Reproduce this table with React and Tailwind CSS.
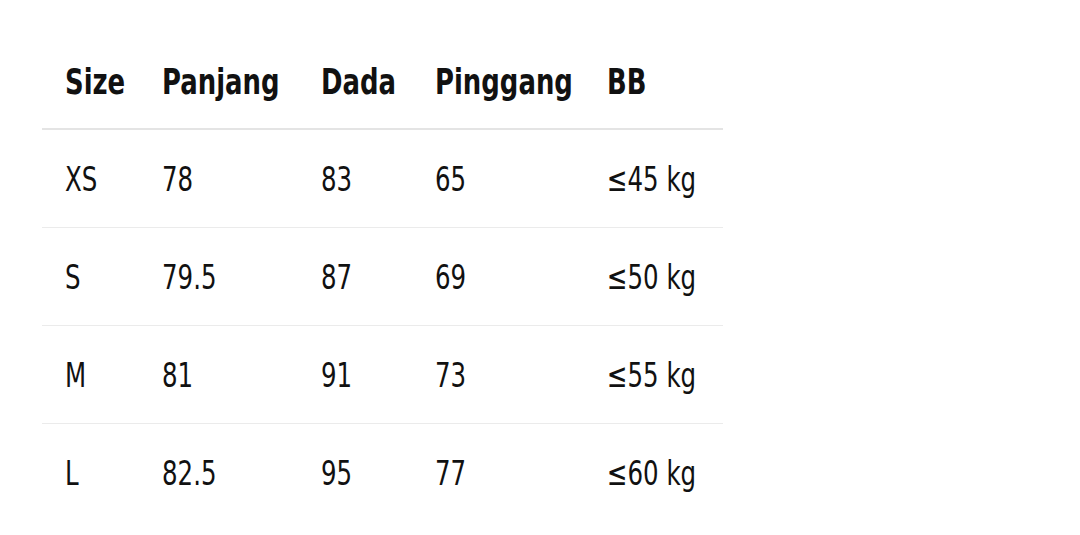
import React from "react";

const rows = [
  ["XS", "78", "83", "65", "≤45 kg"],
  ["S", "79.5", "87", "69", "≤50 kg"],
  ["M", "81", "91", "73", "≤55 kg"],
  ["L", "82.5", "95", "77", "≤60 kg"],
];
const head = ["Size", "Panjang", "Dada", "Pinggang", "BB"];

export default function App() {
  return (
    <div
      className="w-[1080px] h-[535px] bg-white text-[#111] overflow-hidden pt-[32px] pl-[42px]"
      style={{ fontFamily: '"Liberation Sans Narrow", "DejaVu Sans Condensed", "Liberation Sans", sans-serif' }}
    >
      <div className="w-[681px]">
        <div className="grid grid-cols-[97px_159px_114px_172px_139px] h-[98px] items-center border-b-2 border-[#e4e4e4]">
          {head.map((h) => (
            <div key={h} className="pl-[23px] pt-[5px] whitespace-nowrap">
              <span className="inline-block origin-left scale-x-[0.8] text-[36px] font-bold leading-none">{h}</span>
            </div>
          ))}
        </div>
        {rows.map((r, i) => (
          <div
            key={i}
            className={
              "grid grid-cols-[97px_159px_114px_172px_139px] h-[98px] items-center " +
              (i < rows.length - 1 ? "border-b border-[#ebebeb]" : "")
            }
          >
            {r.map((c, j) => (
              <div key={j} className="pl-[23px] pt-[2px] whitespace-nowrap">
                <span className="inline-block origin-left scale-x-[0.8] text-[34px] leading-none">{c}</span>
              </div>
            ))}
          </div>
        ))}
      </div>
    </div>
  );
}
